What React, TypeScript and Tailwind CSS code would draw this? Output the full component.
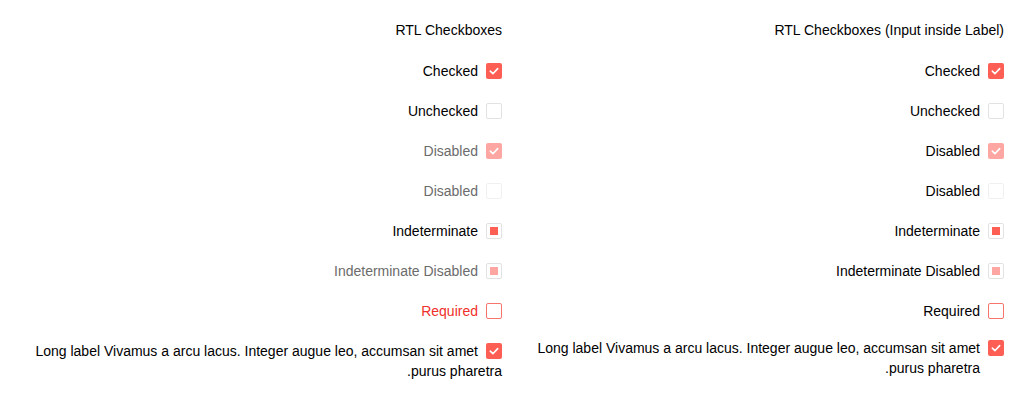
import React from "react";

type Kind = "checked" | "unchecked" | "indeterminate" | "required";

function Box({ kind, disabled, className = "" }: { kind: Kind; disabled?: boolean; className?: string }) {
  const op = disabled ? "opacity-[0.55]" : "";
  if (kind === "checked") {
    return (
      <span className={`inline-flex h-4 w-4 shrink-0 items-center justify-center rounded-[2px] bg-[#fe5f55] ${op} ${className}`}>
        <svg width="16" height="16" viewBox="0 0 16 16" fill="none">
          <path d="M4.3 8.2 L6.9 10.7 L11.7 5.6" stroke="#fff" strokeWidth="1.6" strokeLinecap="round" strokeLinejoin="round" />
        </svg>
      </span>
    );
  }
  if (kind === "indeterminate") {
    return (
      <span className={`inline-flex h-4 w-4 shrink-0 items-center justify-center rounded-[2px] border border-[#e2e2e2] bg-white ${className}`}>
        <span className={`h-2 w-2 bg-[#fe5f55] ${op}`} />
      </span>
    );
  }
  if (kind === "required") {
    return <span className={`inline-block h-4 w-4 shrink-0 rounded-[2px] border border-[#f7756b] bg-white ${className}`} />;
  }
  return (
    <span
      className={`inline-block h-4 w-4 shrink-0 rounded-[2px] border bg-white ${disabled ? "border-[#f0f0f0]" : "border-[#e2e2e2]"} ${className}`}
    />
  );
}

const rows: { label: string; kind: Kind; disabled?: boolean; required?: boolean }[] = [
  { label: "Checked", kind: "checked" },
  { label: "Unchecked", kind: "unchecked" },
  { label: "Disabled", kind: "checked", disabled: true },
  { label: "Disabled", kind: "unchecked", disabled: true },
  { label: "Indeterminate", kind: "indeterminate" },
  { label: "Indeterminate Disabled", kind: "indeterminate", disabled: true },
  { label: "Required", kind: "required", required: true },
];

const LONG = "Long label Vivamus a arcu lacus. Integer augue leo, accumsan sit amet purus pharetra.";

export default function App() {
  return (
    <div
      className="grid grid-cols-2 gap-5 bg-white px-5 pt-5 text-[14px] leading-5 text-black"
      style={{ fontFamily: '"Liberation Sans", Arial, sans-serif' }}
    >
      {/* Left column */}
      <div dir="rtl">
        <div className="h-5">RTL Checkboxes</div>
        <div className="pt-[11px]">
          {rows.map((r, i) => (
            <div key={i} className="flex h-10 items-center gap-2">
              <Box kind={r.kind} disabled={r.disabled} />
              <span className={r.required ? "text-[#f0302a]" : r.disabled ? "text-[#6b6b6b]" : ""}>{r.label}</span>
            </div>
          ))}
          <div className="pt-[10px]">
            <Box kind="checked" className="ml-2 align-[-3px]" />
            {LONG}
          </div>
        </div>
      </div>

      {/* Right column */}
      <div dir="rtl">
        <div className="h-5">RTL Checkboxes (Input inside Label)</div>
        <div className="pt-[11px]">
          {rows.map((r, i) => (
            <label key={i} className="flex h-10 items-center gap-2">
              <Box kind={r.kind} disabled={r.disabled} />
              <span>{r.label}</span>
            </label>
          ))}
          <label className="flex items-start gap-2 pt-[7px]">
            <Box kind="checked" className="mt-[2px]" />
            <span>{LONG}</span>
          </label>
        </div>
      </div>
    </div>
  );
}
